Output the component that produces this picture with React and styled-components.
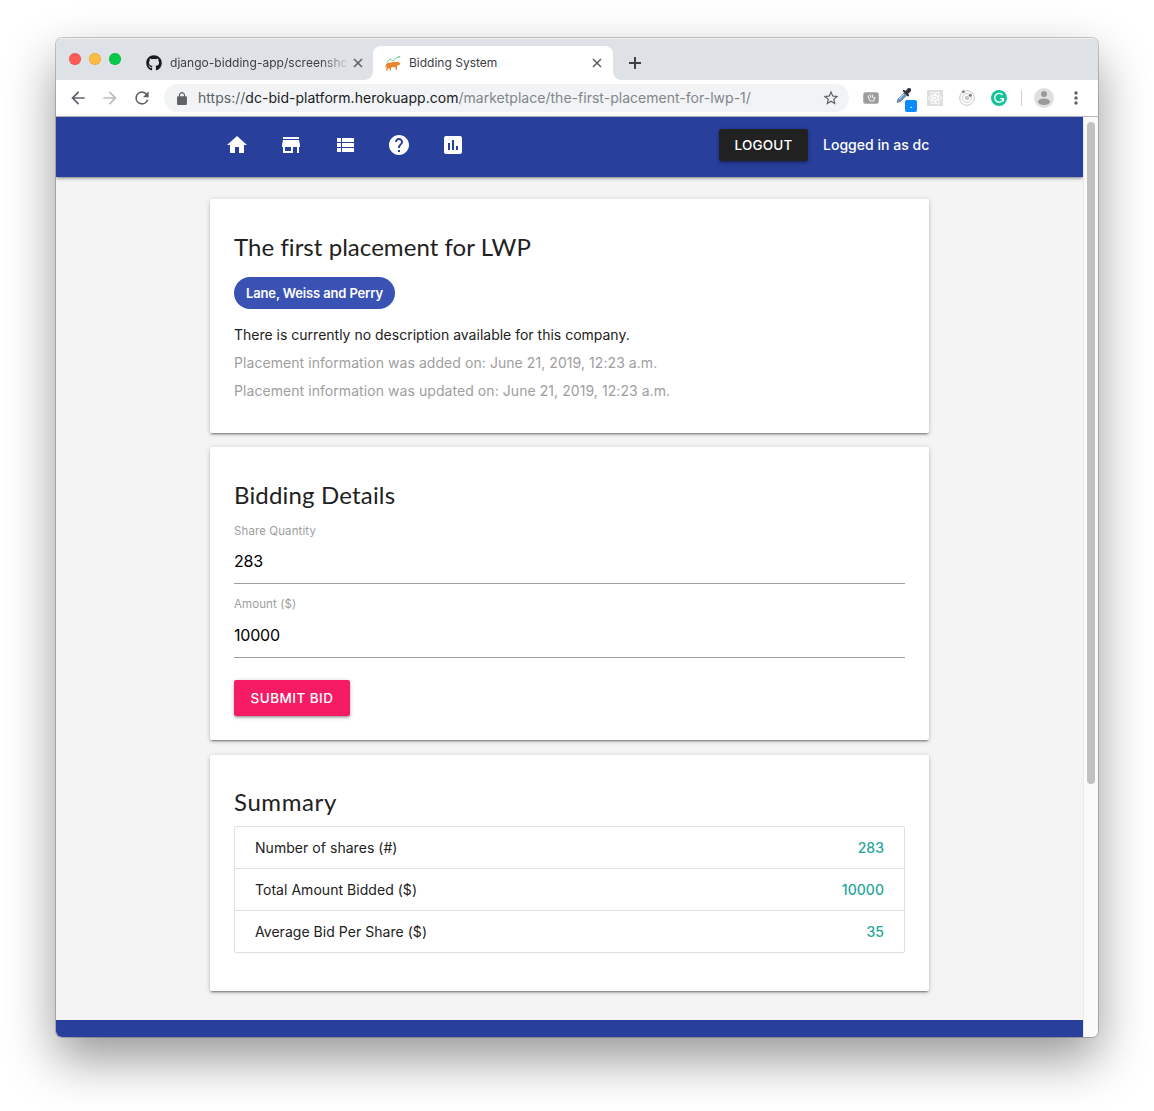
import React from "react";
import styled, { createGlobalStyle } from "styled-components";
import { FaGithub } from "react-icons/fa";

const GlobalStyle = createGlobalStyle`
  *, *::before, *::after { box-sizing: border-box; }
  body {
    margin: 0;
    background: #fff;
    color: #212121;
    font-family: Inter, "Liberation Sans", sans-serif;
  }
`;

const Desktop = styled.div`
  height: 1111px;
  padding: 38px 56px 74px 56px;
  overflow: hidden;
`;

const Window = styled.div`
  width: 1042px;
  height: 999px;
  border-radius: 6px;
  overflow: hidden;
  display: flex;
  flex-direction: column;
  box-shadow: 0 0 0 1px rgba(0, 0, 0, 0.2), 0 22px 50px rgba(0, 0, 0, 0.41);
`;

const TabStrip = styled.div`
  height: 42px;
  flex: none;
  display: flex;
  align-items: flex-end;
  background: #dee1e6;
  box-shadow: inset 0 1px 0 #f0f1f3;
`;

const Lights = styled.div`
  display: flex;
  gap: 8px;
  padding: 0 0 15px 13px;
  width: 77px;
`;

const Light = styled.span`
  width: 12px;
  height: 12px;
  border-radius: 50%;
  background: ${(p) => p.$color};
  box-shadow: inset 0 0 0 0.5px rgba(0, 0, 0, 0.15);
`;

const Tab = styled.div`
  height: 34px;
  width: ${(p) => p.$width}px;
  padding: 0 ${(p) => (p.$active ? 11 : 10)}px 0 ${(p) => (p.$active ? 12 : 13)}px;
  display: flex;
  align-items: center;
  color: #3c4043;
  background: ${(p) => (p.$active ? "#fff" : "transparent")};
  border-radius: 8px 8px 0 0;
  position: relative;

  &::before, &::after {
    content: "";
    display: ${(p) => (p.$active ? "block" : "none")};
    position: absolute;
    bottom: 0;
    width: 8px;
    height: 8px;
  }
  &::before {
    left: -8px;
    background: radial-gradient(circle at 0 0, transparent 7.5px, #fff 8px);
  }
  &::after {
    right: -8px;
    background: radial-gradient(circle at 100% 0, transparent 7.5px, #fff 8px);
  }
`;

const TabTitle = styled.span`
  flex: 1;
  min-width: 0;
  margin: 0 7px 0 8px;
  white-space: nowrap;
  font-size: 12px;
  line-height: 18px;
  letter-spacing: ${(p) => p.$spacing || 0}px;
  ${(p) => p.$fade && "mask-image: linear-gradient(90deg, #000 85%, rgba(0, 0, 0, 0.15) 100%);"}
`;

const NewTab = styled.div`
  height: 34px;
  width: 44px;
  display: flex;
  align-items: center;
  justify-content: center;
`;

const Toolbar = styled.div`
  height: 37px;
  flex: none;
  display: flex;
  align-items: center;
  background: #fff;
  border-bottom: 1px solid #b9babd;
  padding: 0 12px;
`;

const NavButtons = styled.div`
  width: 96px;
  display: flex;
  gap: 12px;
`;

const AddressBar = styled.div`
  width: 685px;
  height: 28px;
  border-radius: 14px;
  background: #f1f3f4;
  display: flex;
  align-items: center;
  padding: 0 9px 0 13px;
`;

const Url = styled.span`
  flex: 1;
  margin-left: 11px;
  font-size: 14px;
  line-height: 20px;
  letter-spacing: 0.02px;
  white-space: nowrap;
  color: #80868b;
`;

const Scheme = styled.span`
  color: #5f6368;
`;

const Host = styled.span`
  color: #202124;
`;

const Extensions = styled.div`
  display: flex;
  align-items: center;
  gap: 16px;
  padding-left: 14px;
`;

const ProfileArea = styled.div`
  display: flex;
  align-items: center;
  gap: 12px;
  padding-left: 14px;
`;

const PickerExt = styled.span`
  width: 21px;
  height: 22px;
  position: relative;
  margin: 0 -6px 0 1px;
  > svg { display: block; }
`;

const PickerBadge = styled.span`
  position: absolute;
  right: 0;
  bottom: -3px;
  width: 12px;
  height: 12px;
  border-radius: 2px;
  background: #0a8cff;
  color: #fff;
  font-size: 9px;
  line-height: 10px;
  text-align: center;
`;

const Divider = styled.span`
  width: 1px;
  height: 16px;
  background: #ccced1;
`;

const Viewport = styled.div`
  flex: 1;
  min-height: 0;
  display: flex;
`;

const Page = styled.div`
  flex: 1;
  display: flex;
  flex-direction: column;
  background: #f4f4f4;
`;

const Scrollbar = styled.div`
  width: 15px;
  padding: 5px 3px 0;
  background: #fafafa;
  border-left: 1px solid #e8e8e8;
`;

const Thumb = styled.div`
  width: 8px;
  height: 662px;
  border-radius: 4px;
  background: #c1c1c1;
`;

const NavBar = styled.header`
  height: 60px;
  flex: none;
  background: #283f9b;
  box-shadow: 0 2px 2px rgba(0, 0, 0, 0.14), 0 3px 1px -2px rgba(0, 0, 0, 0.12), 0 1px 5px rgba(0, 0, 0, 0.2);
`;

const Container = styled.div`
  width: 719px;
  margin: 0 auto;
  display: flex;
`;

const NavInner = styled(Container)`
  height: 56px;
  align-items: center;
  justify-content: space-between;
`;

const NavLinks = styled.nav`
  display: flex;
  gap: 30px;
  padding-left: 15px;
`;

const Account = styled.div`
  display: flex;
  align-items: center;
  gap: 15px;
  color: #fff;
  font-size: 14px;
  font-weight: 500;
  white-space: nowrap;
`;

const UserLabel = styled.span`
  width: 106px;
  padding-bottom: 2px;
  letter-spacing: 0.02px;
`;

const Button = styled.button`
  width: ${(p) => p.$width}px;
  height: ${(p) => p.$height}px;
  padding: 0;
  border: 0;
  border-radius: 2px;
  background: ${(p) => p.$color};
  color: #fff;
  font-family: inherit;
  font-size: 13.5px;
  font-weight: 500;
  letter-spacing: ${(p) => p.$spacing}px;
  white-space: nowrap;
  box-shadow: 0 2px 2px rgba(0, 0, 0, 0.14), 0 3px 1px -2px rgba(0, 0, 0, 0.12), 0 1px 5px rgba(0, 0, 0, 0.2);
`;

const Main = styled(Container)`
  flex: 1;
  flex-direction: column;
  padding-top: 22px;
`;

const Card = styled.section`
  height: ${(p) => p.$height}px;
  margin-bottom: ${(p) => p.$gap || 0}px;
  padding: 32px 24px 0;
  border-radius: 2px;
  background: #fff;
  box-shadow: 0 2px 2px rgba(0, 0, 0, 0.14), 0 3px 1px -2px rgba(0, 0, 0, 0.22), 0 1px 5px rgba(0, 0, 0, 0.2);
`;

const Title = styled.h2`
  margin: 0;
  height: 32px;
  font-family: Lato, "Open Sans", sans-serif;
  font-size: 24px;
  font-weight: 400;
  line-height: ${(p) => p.$leading || 32}px;
  letter-spacing: ${(p) => p.$spacing}px;
  white-space: nowrap;
  color: #212121;
`;

const Chip = styled.div`
  display: flex;
  align-items: center;
  justify-content: center;
  width: 161px;
  height: 32px;
  margin: 14px 0 12px;
  border-radius: 16px;
  background: #3a52b3;
  color: #fff;
  font-size: 13px;
  font-weight: 600;
  letter-spacing: -0.14px;
  white-space: nowrap;
`;

const Line = styled.p`
  margin: 0;
  font-size: 14px;
  line-height: 28px;
  letter-spacing: ${(p) => p.$spacing}px;
  color: ${(p) => (p.$muted ? "#9e9e9e" : "#212121")};
  white-space: nowrap;
`;

const Field = styled.label`
  display: block;
  height: ${(p) => p.$height}px;
  border-bottom: 1px solid #9e9e9e;
  padding-top: 10px;
`;

const FieldLabel = styled.span`
  display: block;
  font-size: 11.5px;
  line-height: 20px;
  letter-spacing: 0.1px;
  color: #9e9e9e;
`;

const FieldValue = styled.span`
  display: block;
  margin-top: ${(p) => p.$offset}px;
  font-size: 16px;
  line-height: 24px;
  letter-spacing: -0.2px;
  color: #000;
`;

const SubmitRow = styled.div`
  padding-top: 22px;
`;

const Collection = styled.ul`
  list-style: none;
  margin: 7px 0 0;
  padding: 0;
  border: 1px solid #e0e0e0;
  border-radius: 2px;
`;

const Row = styled.li`
  display: flex;
  justify-content: space-between;
  height: ${(p) => (p.$last ? 41 : 42)}px;
  padding: 0 20px;
  font-size: 14px;
  line-height: 42px;
  letter-spacing: 0.04px;
  border-bottom: ${(p) => (p.$last ? "0" : "1px solid #e0e0e0")};
`;

const Amount = styled.span`
  color: #26a69a;
  font-weight: 500;
`;

const Footer = styled.footer`
  height: 17px;
  flex: none;
  background: #283f9b;
`;

const Glyph = ({ d, size = 24, color = "#fff" }) => (
  <svg width={size} height={size} viewBox="0 0 24 24" fill={color}>
    <path d={d} />
  </svg>
);

const icons = {
  back: "M20 11H7.83l5.59-5.59L12 4l-8 8 8 8 1.41-1.41L7.83 13H20v-2z",
  forward: "M12 4l-1.41 1.41L16.17 11H4v2h12.17l-5.58 5.59L12 20l8-8z",
  reload:
    "M17.65 6.35A7.95 7.95 0 0 0 12 4a8 8 0 1 0 7.73 10h-2.08A6 6 0 1 1 12 6c1.66 0 3.14.69 4.22 1.78L13 11h7V4l-2.35 2.35z",
  lock: "M18 8h-1V6c0-2.76-2.24-5-5-5S7 3.24 7 6v2H6c-1.1 0-2 .9-2 2v10c0 1.1.9 2 2 2h12c1.1 0 2-.9 2-2V10c0-1.1-.9-2-2-2zm-2.9 0H8.900V6c0-1.710 1.390-3.100 3.100-3.100s3.100 1.390 3.100 3.100v2z",
  star: "M22 9.24l-7.19-.62L12 2 9.19 8.63 2 9.24l5.46 4.73L5.82 21 12 17.27 18.18 21l-1.63-7.03L22 9.24zM12 15.4l-3.76 2.27 1-4.28-3.32-2.88 4.38-.38L12 6.1l1.71 4.04 4.38.38-3.32 2.88 1 4.28L12 15.4z",
  more: "M12 8c1.1 0 2-.9 2-2s-.9-2-2-2-2 .9-2 2 .9 2 2 2zm0 2c-1.1 0-2 .9-2 2s.9 2 2 2 2-.9 2-2-.9-2-2-2zm0 6c-1.1 0-2 .9-2 2s.9 2 2 2 2-.9 2-2-.9-2-2-2z",
};

const navIcons = [
  "M10 20v-6h4v6h5v-8h3L12 3 2 12h3v8z",
  "M20 4H4v2h16V4zm1 10v-2l-1-5H4l-1 5v2h1v6h10v-6h4v6h2v-6h1zm-9 4H6v-4h6v4z",
  "M4 14h4v-4H4v4zm0 5h4v-4H4v4zM4 9h4V5H4v4zm5 5h12v-4H9v4zm0 5h12v-4H9v4zM9 5v4h12V5H9z",
  "M12 2C6.48 2 2 6.48 2 12s4.48 10 10 10 10-4.48 10-10S17.52 2 12 2zm1 17h-2v-2h2v2zm2.07-7.75l-.9.92C13.45 12.9 13 13.5 13 15h-2v-.5c0-1.1.45-2.1 1.17-2.83l1.24-1.26c.37-.36.59-.86.59-1.41 0-1.1-.9-2-2-2s-2 .9-2 2H8c0-2.21 1.79-4 4-4s4 1.79 4 4c0 .88-.36 1.68-.93 2.25z",
  "M19 3H5c-1.1 0-2 .9-2 2v14c0 1.1.9 2 2 2h14c1.1 0 2-.9 2-2V5c0-1.1-.9-2-2-2zM9 17H7v-7h2v7zm4 0h-2V7h2v10zm4 0h-2v-4h2v4z",
];

const CloseIcon = () => (
  <svg width="10" height="10" viewBox="0 0 10 10" stroke="#5a5d61" strokeWidth="1.5">
    <path d="M1 1l8 8M9 1l-8 8" />
  </svg>
);

const BullIcon = () => (
  <svg width="16" height="17" viewBox="0 0 17 17">
    <path d="M2 7.5L5.5 3.5L8.5 6L12 2.5L16 1" fill="none" stroke="#5ec58a" strokeWidth="1" />
    <path d="M14.2.5L16.500.600L15.500 2.500z" fill="#5ec58a" />
    <path
      d="M1 9.5C2.5 7.5 4.5 7.8 6.5 7.5C8.5 7 10 6.2 11.5 6.8L13 7L14.5 5.8L14.3 7.2L16.3 8.3L15.5 9.8L13.8 10.3L12.5 12L12.8 15.5H11.6L10.8 12.6L7.5 12.2L6.2 13.5L6.5 16H5.3L4.5 13.2L3 14L2.3 16.3H1.2L1.5 13.2L1.7 10.8L.7 12.8L.2 12.5z"
      fill="#e8862e"
    />
  </svg>
);

const KeyExtIcon = () => (
  <svg width="16" height="12" viewBox="0 0 16 12">
    <rect x=".5" y=".5" width="15" height="11" rx="2" fill="#9b9b9b" stroke="#b5b5b5" />
    <path d="M5 3.5l1 3.500l1.500 2h3l1.500-3L9.500 5.500M7 2.500l.8 3M9.500 2.500v3" stroke="#e9e9e9" strokeWidth="1.2" fill="none" />
  </svg>
);

const EyedropperIcon = () => (
  <svg width="16" height="17" viewBox="0 0 16 17">
    <path d="M1 15.5L2 12L8 6L10.5 8.5L4.5 14.5z" fill="#5c98d6" stroke="#777" strokeWidth=".8" />
    <path d="M3 12L8 7" stroke="#dce9f6" strokeWidth="1" />
    <path d="M6.5 4L8 2.8L9.5 4L12 1.2C14 .3 16 2 14.8 4.2L12.2 6.7L13.3 8.2L12 9.8z" fill="#30323a" />
  </svg>
);

const ReactExtIcon = () => (
  <svg width="16" height="16" viewBox="0 0 16 16">
    <rect width="16" height="16" fill="#dedede" />
    <g fill="none" stroke="#fff" strokeWidth=".9">
      <ellipse cx="8" cy="8" rx="6.5" ry="2.5" />
      <ellipse cx="8" cy="8" rx="6.5" ry="2.5" transform="rotate(60 8 8)" />
      <ellipse cx="8" cy="8" rx="6.5" ry="2.5" transform="rotate(120 8 8)" />
    </g>
    <circle cx="8" cy="8" r="1.3" fill="#fff" />
  </svg>
);

const OrbitIcon = () => (
  <svg width="16" height="16" viewBox="0 0 16 16">
    <circle cx="8" cy="8" r="7.3" fill="none" stroke="#bcbcbc" strokeWidth=".9" />
    <circle cx="8" cy="8" r="4.5" fill="none" stroke="#c4c4c4" strokeWidth=".9" />
    <circle cx="8" cy="8" r="2.2" fill="#c8c8c8" />
    <circle cx="4.3" cy="1.7" r="1.5" fill="#888" />
    <circle cx="11.3" cy="5.2" r="1.5" fill="#777" />
  </svg>
);

const GrammarIcon = () => (
  <svg width="16" height="16" viewBox="0 0 16 16">
    <circle cx="8" cy="8" r="8" fill="#15c39a" />
    <path d="M11.5 5A4.4 4.4 0 1 0 12.3 9M9 8.7H12.3V11.5" fill="none" stroke="#fff" strokeWidth="1.3" />
  </svg>
);

const AvatarIcon = () => (
  <svg width="20" height="20" viewBox="0 0 20 20">
    <circle cx="10" cy="10" r="10" fill="#dfdfdf" />
    <circle cx="10" cy="6" r="3" fill="#9a9a9a" />
    <ellipse cx="10" cy="13.7" rx="6" ry="3.2" fill="#9a9a9a" />
  </svg>
);

const summary = [
  { label: "Number of shares (#)", value: "283" },
  { label: "Total Amount Bidded ($)", value: "10000" },
  { label: "Average Bid Per Share ($)", value: "35" },
];

export default function App() {
  return (
    <Desktop>
      <GlobalStyle />
      <Window>
        <TabStrip>
          <Lights>
            <Light $color="#fc5b57" />
            <Light $color="#fdbb3f" />
            <Light $color="#06c94a" />
          </Lights>
          <Tab $width={240}>
            <FaGithub size={16} color="#191b1e" />
            <TabTitle $fade $spacing={0.03}>django-bidding-app/screensho</TabTitle>
            <CloseIcon />
          </Tab>
          <Tab $active $width={240}>
            <BullIcon />
            <TabTitle>Bidding System</TabTitle>
            <CloseIcon />
          </Tab>
          <NewTab>
            <svg width="12" height="12" viewBox="0 0 12 12" stroke="#3c4043" strokeWidth="2">
              <path d="M6 0v12M0 6h12" />
            </svg>
          </NewTab>
        </TabStrip>
        <Toolbar>
          <NavButtons>
            <Glyph d={icons.back} size={20} color="#5f6368" />
            <Glyph d={icons.forward} size={20} color="#bbbdbf" />
            <Glyph d={icons.reload} size={20} color="#5f6368" />
          </NavButtons>
          <AddressBar>
            <svg width="10" height="13" viewBox="4 1 16 21" fill="#5f6368">
              <path d={icons.lock} />
            </svg>
            <Url>
              <Scheme>https://</Scheme>
              <Host>dc-bid-platform.herokuapp.com</Host>
              /marketplace/the-first-placement-for-lwp-1/
            </Url>
            <Glyph d={icons.star} size={18} color="#5f6368" />
          </AddressBar>
          <Extensions>
            <KeyExtIcon />
            <PickerExt>
              <EyedropperIcon />
              <PickerBadge>.</PickerBadge>
            </PickerExt>
            <ReactExtIcon />
            <OrbitIcon />
            <GrammarIcon />
          </Extensions>
          <ProfileArea>
            <Divider />
            <AvatarIcon />
            <Glyph d={icons.more} size={20} color="#5f6368" />
          </ProfileArea>
        </Toolbar>
        <Viewport>
          <Page>
            <NavBar>
              <NavInner>
                <NavLinks>
                  {navIcons.map((d) => (
                    <Glyph key={d} d={d} />
                  ))}
                </NavLinks>
                <Account>
                  <Button $width={89} $height={32} $color="#212121" $spacing={0.2}>LOGOUT</Button>
                  <UserLabel>Logged in as dc</UserLabel>
                </Account>
              </NavInner>
            </NavBar>
            <Main>
              <Card $height={234} $gap={14}>
                <Title $spacing={0.05}>The first placement for LWP</Title>
                <Chip>Lane, Weiss and Perry</Chip>
                <Line $spacing={0}>There is currently no description available for this company.</Line>
                <Line $muted $spacing={0.065}>Placement information was added on: June 21, 2019, 12:23 a.m.</Line>
                <Line $muted $spacing={0.065}>Placement information was updated on: June 21, 2019, 12:23 a.m.</Line>
              </Card>
              <Card $height={293} $gap={15}>
                <Title $spacing={0.17}>Bidding Details</Title>
                <Field $height={73}>
                  <FieldLabel>Share Quantity</FieldLabel>
                  <FieldValue $offset={8}>283</FieldValue>
                </Field>
                <Field $height={74}>
                  <FieldLabel>Amount ($)</FieldLabel>
                  <FieldValue $offset={9}>10000</FieldValue>
                </Field>
                <SubmitRow>
                  <Button $width={116} $height={36} $color="#f51c65" $spacing={0.45}>SUBMIT BID</Button>
                </SubmitRow>
              </Card>
              <Card $height={236}>
                <Title $spacing={0.6} $leading={30}>Summary</Title>
                <Collection>
                  {summary.map((row, i) => (
                    <Row key={row.label} $last={i === summary.length - 1}>
                      <span>{row.label}</span>
                      <Amount>{row.value}</Amount>
                    </Row>
                  ))}
                </Collection>
              </Card>
            </Main>
            <Footer />
          </Page>
          <Scrollbar>
            <Thumb />
          </Scrollbar>
        </Viewport>
      </Window>
    </Desktop>
  );
}
